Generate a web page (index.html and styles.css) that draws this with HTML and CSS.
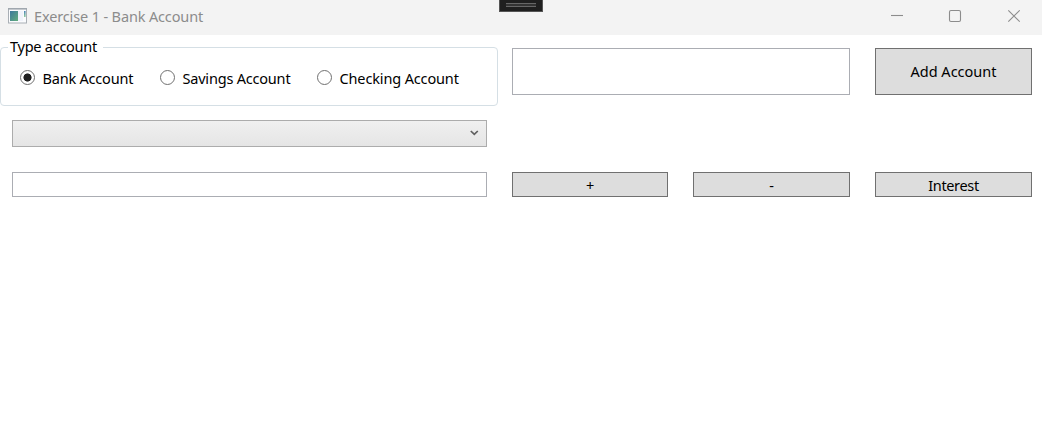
FILE: index.html
```html
<!DOCTYPE html>
<html lang="en">
<head>
<meta charset="utf-8">
<title>Exercise 1 - Bank Account</title>
<link rel="stylesheet" href="styles.css">
</head>
<body>
<div class="window">
  <header class="titlebar">
    <svg class="app-icon" width="20" height="16" viewBox="0 0 20 16">
      <defs>
        <linearGradient id="pane" x1="0" y1="0" x2="1" y2="1"><stop offset="0" stop-color="#3c789d"/><stop offset="1" stop-color="#62ad7c"/></linearGradient>
        <linearGradient id="strip" x1="0" y1="0" x2="0" y2="1"><stop offset="0" stop-color="#4a83b8"/><stop offset="1" stop-color="#8fcb9d"/></linearGradient>
      </defs>
      <rect x=".5" y=".5" width="18" height="14.5" fill="#fafbfd" stroke="#a9afb5"/>
      <path d="M0 .8h19" stroke="#a0a7ae" stroke-width="1.6"/>
      <rect x="2" y="3" width="8" height="10" fill="url(#pane)"/>
      <rect x="10" y="3" width="5" height="10" fill="#f0f3fb"/>
      <rect x="16" y="3" width="1.6" height="6" fill="url(#strip)"/>
    </svg>
    <span class="title">Exercise 1 - Bank Account</span>
    <svg class="window-controls" width="130" height="14" viewBox="0 0 130 14" fill="none" stroke="#8c8c8c" stroke-width="1.1">
      <path d="M1 6.5h12"/>
      <rect x="59.5" y="1.5" width="11" height="11" rx="1.5"/>
      <path d="M118.3 1.3l11.4 11.4M129.7 1.3l-11.4 11.4"/>
    </svg>
    <div class="debug-bar"><span class="grip"></span></div>
  </header>
  <main class="content">
    <div class="row row-top">
      <fieldset class="group">
        <legend class="legend">Type account</legend>
        <label class="option bank"><i class="radio checked"></i><span>Bank Account</span></label>
        <label class="option savings"><i class="radio"></i><span>Savings Account</span></label>
        <label class="option checking"><i class="radio"></i><span>Checking Account</span></label>
      </fieldset>
      <div class="field name-field"></div>
      <button class="button add">Add Account</button>
    </div>
    <div class="combo">
      <svg width="9" height="6" viewBox="0 0 9 6" fill="none" stroke="#606060" stroke-width="1.7"><path d="M.8 1l3.5 3.4L7.8 1"/></svg>
    </div>
    <div class="row row-actions">
      <div class="field amount"></div>
      <button class="button plus">+</button>
      <button class="button minus">-</button>
      <button class="button interest">Interest</button>
    </div>
  </main>
</div>
</body>
</html>
```
FILE: styles.css
```css
* { box-sizing: border-box; }
body {
  margin: 0;
  background: #fff;
  color: #000;
  font: 14.5px/20px "Noto Sans", "Open Sans", sans-serif;
  letter-spacing: -0.2px;
}
.window { width: 1042px; height: 423px; overflow: hidden; background: #fff; }
.titlebar {
  position: relative;
  display: flex;
  align-items: center;
  height: 35px;
  padding: 0 22px 3px 8px;
  background: #f3f3f3;
  color: #8c8c8c;
}
.title { margin-left: 6px; letter-spacing: -0.14px; white-space: nowrap; }
.window-controls { margin-left: auto; }
.debug-bar {
  position: absolute;
  left: 499px;
  top: 0;
  width: 44px;
  height: 12px;
  padding: 3px 6px;
  background: #1f1f1f;
  border: 1px solid #555;
  border-top: 0;
}
.grip { display: block; height: 4px; border: solid #666; border-width: 1px 0; background: #333; }
.content { padding-top: 12px; }
.row { display: flex; align-items: flex-start; }
.row-top { height: 73px; }
.group {
  display: flex;
  position: relative;
  width: 498px;
  height: 59px;
  margin: 0;
  padding: 20px 0 0 19px;
  border: 1px solid #d5dfe5;
  border-radius: 4px;
}
.legend {
  position: absolute;
  top: -12px;
  left: 7px;
  width: 95px;
  padding: 0 0 0 2px;
  background: #fff;
  letter-spacing: -0.25px;
  white-space: nowrap;
}
.option { display: flex; height: 20px; white-space: nowrap; }
.bank { width: 140px; }
.savings { width: 157px; }
.checking { letter-spacing: -0.14px; }
.radio {
  flex: none;
  width: 15px;
  height: 15px;
  margin: 2px 7.5px 0 0;
  border: 1px solid #707070;
  border-radius: 50%;
  background: #fff;
}
.radio.checked { background: radial-gradient(circle, #212121 3.7px, #fff 4.4px); }
.field { background: #fff; border: 1px solid #abadb3; }
.name-field { width: 338px; height: 47px; margin: 1px 25px 0 14px; }
.button {
  height: 25px;
  padding: 1px 0 0;
  border: 1px solid #707070;
  border-radius: 0;
  background: #ddd;
  color: #000;
  font: inherit;
  letter-spacing: inherit;
}
.add { width: 157px; height: 47px; margin-top: 1px; padding: 0 0 1px; letter-spacing: 0; }
.combo {
  display: flex;
  justify-content: flex-end;
  width: 475px;
  height: 27px;
  margin-left: 12px;
  padding: 9px 7px 0 0;
  border: 1px solid #acacac;
  background: linear-gradient(#f0f0f0, #e5e5e5);
}
.row-actions { gap: 25px; margin-top: 25px; padding-left: 12px; }
.amount { width: 475px; height: 25px; }
.plus { width: 156px; }
.minus, .interest { width: 157px; }
.interest { letter-spacing: -0.35px; }
```
